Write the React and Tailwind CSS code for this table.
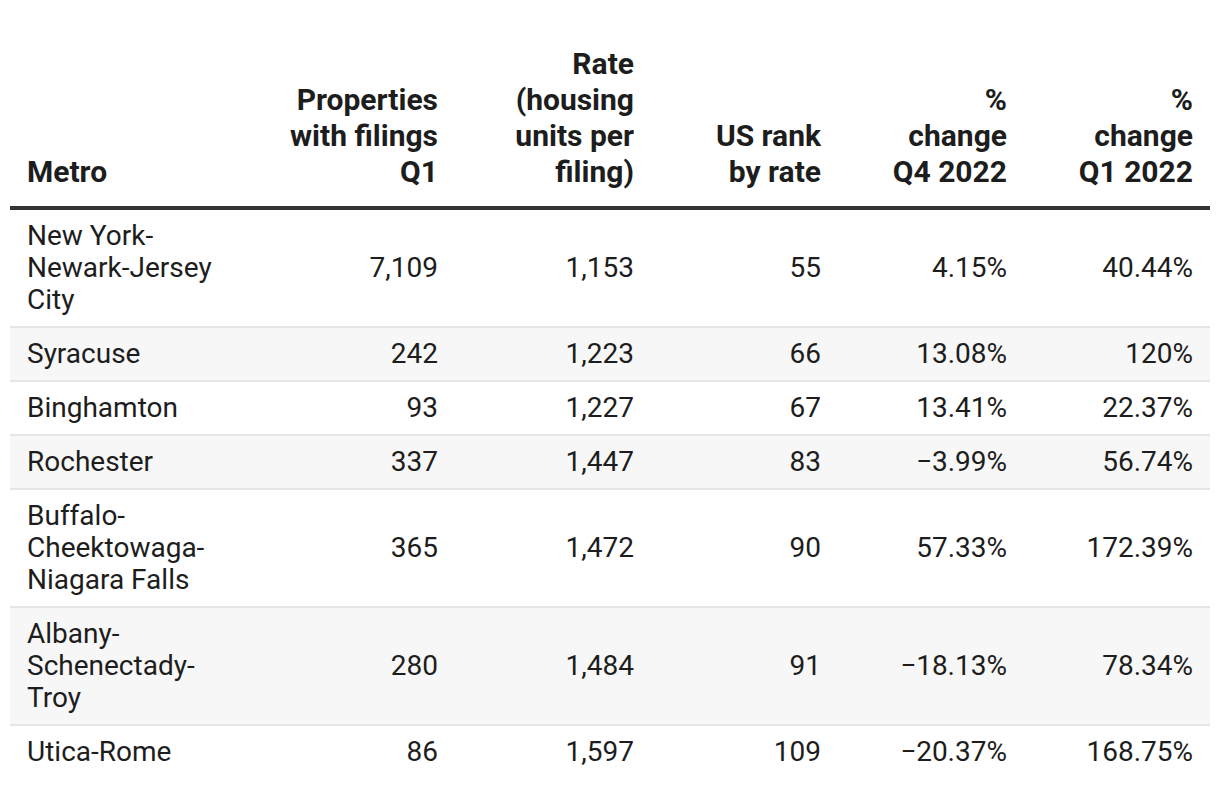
import React from "react";

const filas = [
  { metro: "New York-Newark-Jersey City", props: "7,109", rate: "1,153", rank: "55", q4: "4.15%", q1: "40.44%" },
  { metro: "Syracuse", props: "242", rate: "1,223", rank: "66", q4: "13.08%", q1: "120%" },
  { metro: "Binghamton", props: "93", rate: "1,227", rank: "67", q4: "13.41%", q1: "22.37%" },
  { metro: "Rochester", props: "337", rate: "1,447", rank: "83", q4: "\u22123.99%", q1: "56.74%" },
  { metro: "Buffalo-Cheektowaga-Niagara Falls", props: "365", rate: "1,472", rank: "90", q4: "57.33%", q1: "172.39%" },
  { metro: "Albany-Schenectady-Troy", props: "280", rate: "1,484", rank: "91", q4: "\u221218.13%", q1: "78.34%" },
  { metro: "Utica-Rome", props: "86", rate: "1,597", rank: "109", q4: "\u221220.37%", q1: "168.75%" },
];

// el ancho del texto de cada encabezado fuerza los saltos de línea
const headers = [
  { label: "Properties with filings Q1", w: "w-[171px]" },
  { label: "Rate (housing units per filing)", w: "w-[130px]" },
  { label: "US rank by rate", w: "w-[122px]" },
  { label: "% change Q4 2022", w: "w-[122px]" },
  { label: "% change Q1 2022", w: "w-[122px]" },
];

export default function App() {
  return (
    <div
      className="bg-white p-[10px] text-[#1d1d1d]"
      style={{ fontFamily: "Roboto, 'Liberation Sans', sans-serif" }}
    >
      <table className="w-[1200px] table-fixed border-collapse">
        <colgroup>
          <col className="w-[240px]" />
          <col className="w-[205px]" />
          <col className="w-[196px]" />
          <col className="w-[187px]" />
          <col className="w-[186px]" />
          <col className="w-[186px]" />
        </colgroup>
        <thead>
          <tr className="border-b-4 border-[#333333]">
            <th className="px-[17px] pt-9 pb-4 text-left align-bottom text-[30px] font-bold leading-[36px]">
              Metro
            </th>
            {headers.map((h) => (
              <th
                key={h.label}
                className="px-[17px] pt-9 pb-4 text-right align-bottom text-[30px] font-bold leading-[36px]"
              >
                <div className={`ml-auto ${h.w}`}>{h.label}</div>
              </th>
            ))}
          </tr>
        </thead>
        <tbody>
          {filas.map((f, i) => (
            <tr
              key={f.metro}
              className={`${i % 2 === 1 ? "bg-[#f7f7f7]" : "bg-white"} ${
                i < filas.length - 1 ? "border-b-2 border-[#e6e6e6]" : ""
              } text-[28px] leading-[32px]`}
            >
              <td className="px-[17px] py-[10px] text-left align-middle">{f.metro}</td>
              <td className="px-[17px] py-[10px] text-right align-middle">{f.props}</td>
              <td className="px-[17px] py-[10px] text-right align-middle">{f.rate}</td>
              <td className="px-[17px] py-[10px] text-right align-middle">{f.rank}</td>
              <td className="px-[17px] py-[10px] text-right align-middle">{f.q4}</td>
              <td className="px-[17px] py-[10px] text-right align-middle">{f.q1}</td>
            </tr>
          ))}
        </tbody>
      </table>
    </div>
  );
}
